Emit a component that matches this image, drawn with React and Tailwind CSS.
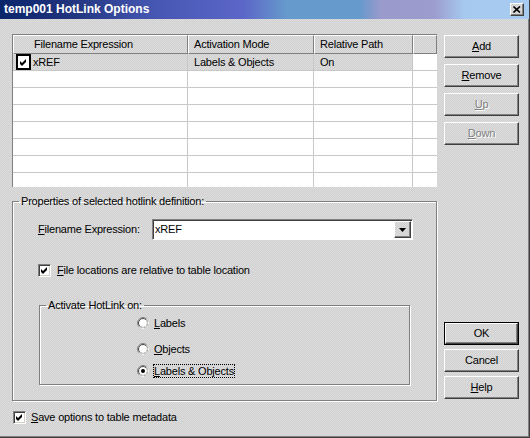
import React from 'react';

const PAT = 'bg-[repeating-conic-gradient(#d0d0d0_0_25%,#dddddd_0_50%)] bg-[length:2px_2px]';

const COLS = [175, 126, 99, 24];

function Check() {
  return (
    <svg width="9" height="9" viewBox="0 0 9 9" className="block">
      <path d="M1 3 L3 5 L7 1 L7 4 L3 8 L1 6 Z" fill="#000" />
    </svg>
  );
}

function CheckBox() {
  return (
    <div className="w-[13px] h-[13px] shrink-0 bg-white border border-t-[#808080] border-l-[#808080] border-b-white border-r-white shadow-[inset_1px_1px_0_#404040,inset_-1px_-1px_0_#d4d0c8] flex items-center justify-center">
      <Check />
    </div>
  );
}

function Radio({ on }) {
  return (
    <svg width="12" height="12" viewBox="0 0 12 12" className="block shrink-0">
      <circle cx="6" cy="6" r="5.5" fill="#fff" stroke="#808080" />
      <path d="M9.89 2.11 A5.5 5.5 0 0 1 2.11 9.89" fill="none" stroke="#fff" />
      <circle cx="6" cy="6" r="4.5" fill="#fff" stroke="#404040" />
      <path d="M9.18 2.82 A4.5 4.5 0 0 1 2.82 9.18" fill="none" stroke="#d4d0c8" />
      {on && <circle cx="6" cy="6" r="2" fill="#000" />}
    </svg>
  );
}

function Btn({ children, disabled, def }) {
  const face = (
    <div
      className={`${PAT} w-full h-full flex items-center justify-center border border-t-white border-l-white border-r-[#404040] border-b-[#404040] shadow-[inset_-1px_-1px_0_#808080] ${
        disabled ? 'text-[#808080] [text-shadow:1px_1px_0_#fff]' : ''
      }`}
    >
      {children}
    </div>
  );
  if (def) {
    return <div className="w-[75px] h-[23px] border border-black">{face}</div>;
  }
  return <div className="w-[75px] h-[23px]">{face}</div>;
}

function HeaderCell({ w, children, pad }) {
  return (
    <div
      style={{ width: w }}
      className={`${PAT} h-[19px] shrink-0 flex items-center border border-t-white border-l-white border-r-[#808080] border-b-[#808080] ${pad}`}
    >
      {children}
    </div>
  );
}

function Row({ first }) {
  return (
    <div className="flex h-[17px] shrink-0 border-b border-[#c8c8c8]">
      {COLS.map((w, i) => (
        <div
          key={i}
          style={{ width: w }}
          className={`h-full shrink-0 flex items-center ${i < 3 ? 'border-r border-[#c8c8c8]' : ''} ${
            first && i < 3 ? PAT : 'bg-white'
          } ${i === 0 ? 'pl-[3px] gap-[2px]' : 'pl-[6px]'}`}
        >
          {first && i === 0 && (
            <>
              <div className="w-[15px] h-[16px] border-2 border-black bg-white flex items-center justify-center">
                <Check />
              </div>
              <span>xREF</span>
            </>
          )}
          {first && i === 1 && <span>Labels &amp; Objects</span>}
          {first && i === 2 && <span>On</span>}
        </div>
      ))}
    </div>
  );
}

export default function App() {
  return (
    <div
      className={`${PAT} w-[530px] h-[438px] overflow-hidden font-['Liberation_Sans',Arial,sans-serif] text-[11px] leading-[13px] tracking-[-0.2px] text-black border-r border-b border-[#404040] shadow-[inset_-1px_-1px_0_#808080]`}
    >
      {/* title bar */}
      <div className="h-[19px] flex items-center justify-between pl-[4px] pr-[5px] bg-[linear-gradient(to_right,#0a246a_0%,#22357f_14%,#4455b0_28%,#5c66c8_46%,#6699cc_54%,#6699cc_68%,#9a9acc_72%,#9c9ccf_82%,#a6caf0_88%,#a6caf0_100%)]">
        <span className="text-white font-bold text-[12px] tracking-normal">temp001 HotLink Options</span>
        <div className={`${PAT} w-[14px] h-[13px] flex items-center justify-center border border-t-white border-l-white border-r-[#404040] border-b-[#404040] shadow-[inset_-1px_-1px_0_#808080]`}>
          <svg width="8" height="7" viewBox="0 0 8 7" className="block">
            <path d="M0.5 0.5 L7 6.5 M7 0.5 L0.5 6.5" stroke="#000" strokeWidth="1.6" />
          </svg>
        </div>
      </div>

      <div className="flex pl-[12px] pt-[15px]">
        {/* left column */}
        <div className="w-[425px] shrink-0 flex flex-col">
          <div className="h-[153px] bg-white border-t border-l border-[#808080] flex flex-col overflow-hidden">
            <div className="flex shrink-0">
              <HeaderCell w={COLS[0]} pad="pl-[20px]">Filename Expression</HeaderCell>
              <HeaderCell w={COLS[1]} pad="pl-[5px]">Activation Mode</HeaderCell>
              <HeaderCell w={COLS[2]} pad="pl-[5px]">Relative Path</HeaderCell>
              <HeaderCell w={COLS[3]} pad="" />
            </div>
            <Row first />
            {[0, 1, 2, 3, 4, 5, 6].map((r) => (
              <Row key={r} />
            ))}
          </div>

          <fieldset className="mt-[8px] h-[206px] border border-[#808080] shadow-[inset_1px_1px_0_#fff,1px_1px_0_#fff]">
            <legend className="ml-[6px] px-[2px] leading-[13px]">Properties of selected hotlink definition:</legend>

            <div className="pl-[25px]">
              <div className="flex items-center mt-[11px]">
                <span className="w-[114px] shrink-0">
                  <u className="underline-offset-1">F</u>ilename Expression:
                </span>
                <div className="w-[261px] h-[21px] bg-white border border-t-[#808080] border-l-[#808080] border-b-white border-r-white shadow-[inset_1px_1px_0_#404040] flex items-center justify-between pl-[2px] pr-[1px]">
                  <span>xREF</span>
                  <div className={`${PAT} w-[17px] h-[17px] flex items-center justify-center border border-t-white border-l-white border-r-[#404040] border-b-[#404040] shadow-[inset_-1px_-1px_0_#808080]`}>
                    <svg width="7" height="4" viewBox="0 0 7 4" className="block">
                      <path d="M0 0 H7 L3.5 4 Z" fill="#000" />
                    </svg>
                  </div>
                </div>
              </div>

              <div className="flex items-center gap-[6px] mt-[24px]">
                <CheckBox />
                <span>
                  <u className="underline-offset-1">F</u>ile locations are relative to table location
                </span>
              </div>

              <fieldset className="mt-[22px] ml-[1px] w-[371px] h-[86px] border border-[#808080] shadow-[inset_1px_1px_0_#fff,1px_1px_0_#fff]">
                <legend className="ml-[6px] px-[2px] leading-[13px]">Activate HotLink on:</legend>
                <div className="pl-[97px]">
                  <div className="flex items-center h-[14px] mt-[4px]">
                    <Radio />
                    <span className="ml-[4px] border border-transparent">
                      <u className="underline-offset-1">L</u>abels
                    </span>
                  </div>
                  <div className="flex items-center h-[14px] mt-[12px]">
                    <Radio />
                    <span className="ml-[4px] border border-transparent">
                      <u className="underline-offset-1">O</u>bjects
                    </span>
                  </div>
                  <div className="flex items-center h-[14px] mt-[8px]">
                    <Radio on />
                    <span className="ml-[4px] border border-dotted border-black leading-[12px]">
                      <u className="underline-offset-1">L</u>abels &amp; Objects
                    </span>
                  </div>
                </div>
              </fieldset>
            </div>
          </fieldset>

          <div className="flex items-center gap-[5px] mt-[10px] ml-[1px]">
            <CheckBox />
            <span>
              <u className="underline-offset-1">S</u>ave options to table metadata
            </span>
          </div>
        </div>

        {/* right column */}
        <div className="ml-[7px] flex flex-col">
          <div className="flex flex-col gap-[6px] mt-[1px]">
            <Btn>
              <span><u className="underline-offset-1">A</u>dd</span>
            </Btn>
            <Btn>
              <span><u className="underline-offset-1">R</u>emove</span>
            </Btn>
            <Btn disabled>
              <span><u className="underline-offset-1">U</u>p</span>
            </Btn>
            <Btn disabled>
              <span><u className="underline-offset-1">D</u>own</span>
            </Btn>
          </div>
          <div className="flex flex-col gap-[4px] mt-[177px]">
            <Btn def>OK</Btn>
            <Btn>Cancel</Btn>
            <Btn>
              <span><u className="underline-offset-1">H</u>elp</span>
            </Btn>
          </div>
        </div>
      </div>
    </div>
  );
}
